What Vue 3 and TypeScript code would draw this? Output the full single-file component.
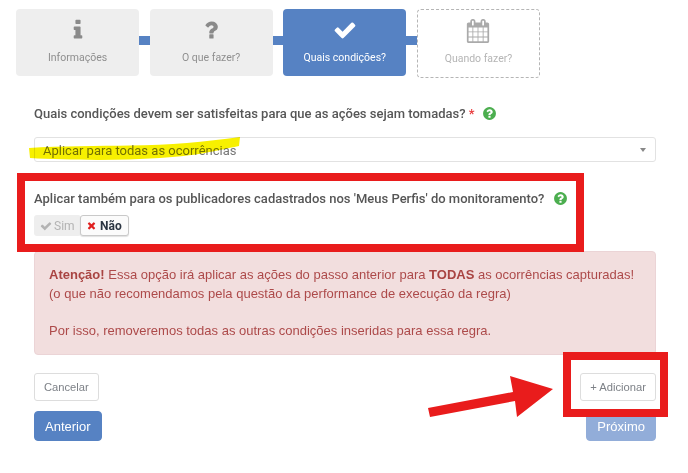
<script setup lang="ts">
interface Step {
  label: string
  icon: string
  kind: 'done' | 'active' | 'todo'
  size: number
}

const INFO = 'M1216 1344v128q0 26-19 45t-45 19h-512q-26 0-45-19t-19-45v-128q0-26 19-45t45-19h64v-384h-64q-26 0-45-19t-19-45v-128q0-26 19-45t45-19h384q26 0 45 19t19 45v576h64q26 0 45 19t19 45zm-128-1152v192q0 26-19 45t-45 19h-256q-26 0-45-19t-19-45v-192q0-26 19-45t45-19h256q26 0 45 19t19 45z'
const QUESTION = 'M1088 1256v240q0 16-12 28t-28 12h-240q-16 0-28-12t-12-28v-240q0-16 12-28t28-12h240q16 0 28 12t12 28zm316-600q0 54-15.5 101t-35 76.5-55 59.5-57.5 43.5-61 35.5q-41 23-68.5 65t-27.5 67q0 17-12 32.5t-28 15.5h-240q-15 0-25.5-18.5t-10.5-37.5v-45q0-83 65-156.5t143-108.5q59-27 84-56t25-76q0-42-46.5-74t-107.5-32q-65 0-108 29-35 25-107 115-13 16-31 16-12 0-25-8l-164-125q-13-10-15.5-25t5.5-28q160-266 464-266 80 0 161 31t146 83 106 127.5 41 158.5z'
const CHECK = 'M1671 566q0 40-28 68l-724 724-136 136q-28 28-68 28t-68-28l-136-136-362-362q-28-28-28-68t28-68l136-136q28-28 68-28t68 28l294 295 656-657q28-28 68-28t68 28l136 136q28 28 28 68z'
const CALENDAR = 'M192 1664h288v-288h-288v288zm352 0h320v-288h-320v288zm-352-352h288v-320h-288v320zm352 0h320v-320h-320v320zm-352-384h288v-288h-288v288zm736 736h320v-288h-320v288zm-384-736h320v-288h-320v288zm768 736h288v-288h-288v288zm-384-352h320v-320h-320v320zm-352-864v-288q0-13-9.5-22.5t-22.5-9.5h-64q-13 0-22.5 9.5t-9.5 22.5v288q0 13 9.5 22.5t22.5 9.5h64q13 0 22.5-9.5t9.5-22.5zm736 864h288v-320h-288v320zm-384-384h320v-288h-320v288zm384 0h288v-288h-288v288zm32-480v-288q0-13-9.5-22.5t-22.5-9.5h-64q-13 0-22.5 9.5t-9.5 22.5v288q0 13 9.5 22.5t22.5 9.5h64q13 0 22.5-9.5t9.5-22.5zm384-64v1280q0 52-38 90t-90 38h-1408q-52 0-90-38t-38-90v-1280q0-52 38-90t90-38h128v-96q0-66 47-113t113-47h64q66 0 113 47t47 113v96h384v-96q0-66 47-113t113-47h64q66 0 113 47t47 113v96h128q52 0 90 38t38 90z'
const HELP = 'M1024 1376v-192q0-14-9-23t-23-9h-192q-14 0-23 9t-9 23v192q0 14 9 23t23 9h192q14 0 23-9t9-23zm256-672q0-88-55.5-163t-138.5-116-170-41q-243 0-371 213-15 24 8 42l132 100q7 6 19 6 16 0 25-12 53-68 86-92 34-24 86-24 48 0 85.5 26t37.5 59q0 38-20 61t-68 45q-63 28-115.5 86.5t-52.5 125.5v36q0 14 9 23t23 9h192q14 0 23-9t9-23q0-19 21.5-49.5t54.5-49.5q32-18 49-28.5t46-35 44.5-48 28-60.5 12.5-81zm384 192q0 209-103 385.5t-279.5 279.5-385.5 103-385.5-103-279.5-279.5-103-385.5 103-385.5 279.5-279.5 385.5-103 385.5 103 279.5 279.5 103 385.5z'
const TIMES = 'M1490 1322q0 40-28 68l-136 136q-28 28-68 28t-68-28l-294-294-294 294q-28 28-68 28t-68-28l-136-136q-28-28-28-68t28-68l294-294-294-294q-28-28-28-68t28-68l136-136q28-28 68-28t68 28l294 294 294-294q28-28 68-28t68 28l136 136q28 28 28 68t-28 68l-294 294 294 294q28 28 28 68z'

const steps: Step[] = [
  { label: 'Informações', icon: INFO, kind: 'done', size: 24 },
  { label: 'O que fazer?', icon: QUESTION, kind: 'done', size: 24 },
  { label: 'Quais condições?', icon: CHECK, kind: 'active', size: 24 },
  { label: 'Quando fazer?', icon: CALENDAR, kind: 'todo', size: 24 },
]
</script>

<template>
  <div class="page">
    <div class="steps">
      <template v-for="(step, i) in steps" :key="step.label">
        <div v-if="i > 0" class="link"></div>
        <div class="step" :class="step.kind">
          <svg class="step-icon" :width="step.size" :height="step.size" viewBox="0 0 1792 1792">
            <path :d="step.icon" fill="currentColor" />
          </svg>
          <span>{{ step.label }}</span>
        </div>
      </template>
    </div>

    <div class="question">
      Quais condições devem ser satisfeitas para que as ações sejam tomadas?
      <span class="req">*</span>
      <svg class="help help-wide" width="15" height="15" viewBox="0 0 1792 1792"><path :d="HELP" fill="#4cae4f" /></svg>
    </div>
    <div class="select">
      <span>Aplicar para todas as ocorrências</span>
      <i class="caret"></i>
    </div>

    <div class="also">
      <div class="question also-q">
        Aplicar também para os publicadores cadastrados nos 'Meus Perfis' do monitoramento?
        <svg class="help" width="15" height="15" viewBox="0 0 1792 1792"><path :d="HELP" fill="#4cae4f" /></svg>
      </div>
      <div class="toggle">
        <div class="opt off">
          <svg width="12" height="12" viewBox="0 0 1792 1792"><path :d="CHECK" fill="currentColor" /></svg>
          Sim
        </div>
        <div class="opt on">
          <svg width="11" height="11" viewBox="0 0 1792 1792"><path :d="TIMES" fill="#e0201f" /></svg>
          Não
        </div>
      </div>
    </div>

    <div class="alert">
      <p><b>Atenção!</b> Essa opção irá aplicar as ações do passo anterior para <b>TODAS</b> as ocorrências capturadas!<br>(o que não recomendamos pela questão da performance de execução da regra)</p>
      <p>Por isso, removeremos todas as outras condições inseridas para essa regra.</p>
    </div>

    <div class="row row-small">
      <button class="btn small">Cancelar</button>
      <button class="btn small">+ Adicionar</button>
    </div>
    <div class="row">
      <button class="btn primary">Anterior</button>
      <button class="btn primary faded">Próximo</button>
    </div>

    <!-- marcações por cima do screenshot -->
    <svg class="marks" width="688" height="473" viewBox="0 0 688 473">
      <path class="marker" d="M29 148 C60 146 100 146 130 145.5 C170 145 205 142 240 137 L239 146 C215 151 195 156 160 158 C115 161 65 160 30 158 Z" />
      <rect x="21" y="177" width="559" height="71" fill="none" stroke="#e91c1c" stroke-width="8" />
      <rect x="567" y="356" width="97" height="57" fill="none" stroke="#e91c1c" stroke-width="8" />
      <path d="M428 408 L513 392 L510 376 L553 389 L517 417 L515 401 L430 417 Z" fill="#e91c1c" />
    </svg>
  </div>
</template>

<style>
html,
body {
  margin: 0;
  background: #fff;
}
</style>

<style scoped>
.page {
  position: relative;
  width: 688px;
  height: 473px;
  box-sizing: border-box;
  padding: 9px 32px 0 34px;
  overflow: hidden;
  font-family: Roboto, sans-serif;
  color: #555;
}

.steps {
  display: flex;
  align-items: flex-start;
  margin-left: -18px;
}

.step {
  box-sizing: border-box;
  width: 123px;
  height: 67px;
  flex: none;
  border-radius: 4px;
  display: flex;
  flex-direction: column;
  align-items: center;
  padding-top: 9px;
  font-size: 10.5px;
}

.step-icon {
  margin-bottom: 9px;
}

.step.done {
  background: #eeeeee;
  color: #8f8f8f;
}

.step.done .step-icon {
  color: #8a8a8a;
}

.step.active {
  background: #5682c3;
  color: #fff;
}

.step.todo {
  height: 69px;
  border: 1px dashed #b5b5b5;
  color: #b5b5b5;
}

.step.todo .step-icon {
  color: #aaa;
}

.link {
  width: 10.66px;
  height: 9px;
  flex: none;
  margin-top: 27px;
  background: #5682c3;
}

.question {
  margin-top: 27px;
  font-size: 13px;
  line-height: 18px;
  font-weight: 500;
  color: #565656;
}

.req {
  color: #e8383a;
}

.help {
  vertical-align: -3px;
  margin-left: 5px;
}

.help-wide {
  margin-left: 8px;
}

.select {
  box-sizing: border-box;
  display: flex;
  align-items: center;
  justify-content: space-between;
  height: 25px;
  margin-top: 14px;
  padding: 0 9px 0 8px;
  border: 1px solid #e2e2e2;
  border-radius: 3px;
  font-size: 13px;
  color: #777;
}

.select span {
  padding-top: 2px;
}

.caret {
  width: 0;
  height: 0;
  border-left: 3.5px solid transparent;
  border-right: 3.5px solid transparent;
  border-top: 4px solid #888;
}

.also {
  margin-top: 28px;
}

.also-q {
  margin-top: 0;
}

.toggle {
  display: flex;
  margin-top: 7px;
  font-size: 12px;
  line-height: 14px;
}

.opt {
  box-sizing: border-box;
  height: 21px;
  display: flex;
  align-items: center;
  border-radius: 3px;
}

.opt.off {
  width: 47px;
  padding-left: 6px;
  gap: 2px;
  background: #eeeeee;
  color: #b3b3b3;
  margin-right: -1px;
}

.opt.on {
  position: relative;
  width: 49px;
  padding-left: 5px;
  gap: 3px;
  background: #fbfbfb;
  border: 1px solid #c9c9c9;
  box-shadow: 0 1px 1px rgba(0, 0, 0, 0.12);
  color: #2b3542;
  font-weight: 700;
}

.alert {
  box-sizing: border-box;
  height: 104px;
  margin-top: 15px;
  padding: 14px 14px;
  background: #f2dede;
  border: 1px solid #ebd4d6;
  border-radius: 4px;
  font-family: 'Liberation Sans', Arial, sans-serif;
  font-size: 13px;
  line-height: 18.5px;
  color: #ad4a4a;
}

.alert b {
  color: #a94442;
}

.alert p {
  margin: 0 0 18.5px;
}

.row {
  display: flex;
  justify-content: space-between;
  align-items: flex-start;
  margin-top: 10px;
}

.row-small {
  margin-top: 18px;
}

.btn {
  margin: 0;
  font-family: 'Liberation Sans', Arial, sans-serif;
  border-radius: 3px;
  cursor: pointer;
}

.btn.small {
  height: 28px;
  padding: 0 9px;
  background: #fff;
  border: 1px solid #ddd;
  color: #7d8187;
  font-size: 11.2px;
}

.btn.primary {
  height: 30px;
  padding: 0 10px;
  background: #5682c3;
  border: 1px solid #5682c3;
  border-radius: 4px;
  color: #fff;
  font-size: 13px;
}

.btn.faded {
  background: #92add9;
  border-color: #92add9;
}

.marks {
  position: absolute;
  left: 0;
  top: 0;
  pointer-events: none;
}

.marker {
  fill: #f7f000;
  mix-blend-mode: multiply;
}
</style>
